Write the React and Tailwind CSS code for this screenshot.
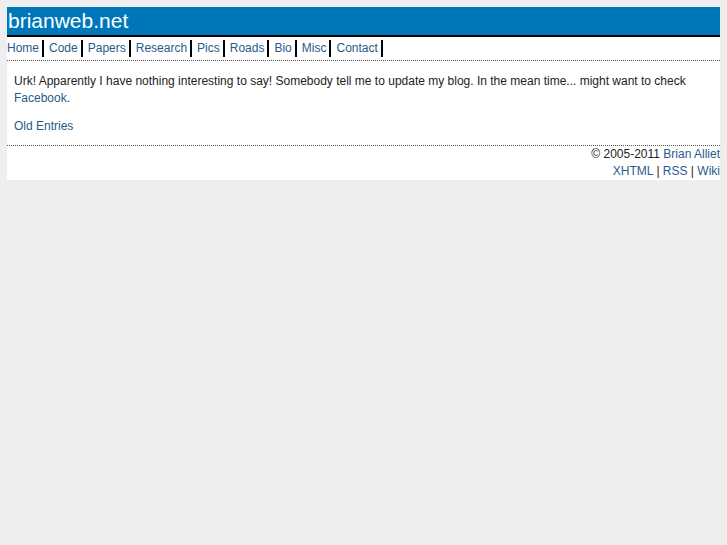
export default function App() {
  const links = ['Home', 'Code', 'Papers', 'Research', 'Pics', 'Roads', 'Bio', 'Misc', 'Contact']
  return (
    <div className="min-h-[545px] bg-[#eeeeee] pt-[7px] px-[7px] font-['Liberation_Sans',Arial,sans-serif]" >
      <div className="w-[713px] bg-white">
        {/* Header */}
        <div className="h-[30px] bg-[#0077bb] border-b-2 border-black text-white text-[21px] leading-[28px] pl-[1px]">
          brianweb.net
        </div>
        {/* Nav */}
        <div className="flex items-center h-[24px] border-b border-dotted border-[#555] text-[12px]">
          {links.map((l, i) => (
            <span key={l} className={`${i === 0 ? 'pl-0' : 'pl-[5px]'} pr-[3px] border-r-2 border-black leading-[17px] text-[#2a5a8c]`}>
              {l}
            </span>
          ))}
        </div>
        {/* Content */}
        <div className="px-[7px] pt-[12px] pb-[10px] text-[12px] leading-[17px] text-[#222]">
          <p>
            Urk! Apparently I have nothing interesting to say! Somebody tell me to update my blog. In the mean time... might want to check{' '}
            <a className="text-[#2a5a8c]">Facebook</a>.
          </p>
          <p className="mt-[11px]">
            <a className="text-[#2a5a8c]">Old Entries</a>
          </p>
        </div>
        {/* Footer */}
        <div className="border-t border-dotted border-[#555] text-right text-[12px] leading-[17px] text-[#222]">
          <div>
            © 2005-2011 <a className="text-[#2a5a8c]">Brian Alliet</a>
          </div>
          <div>
            <a className="text-[#2a5a8c]">XHTML</a> | <a className="text-[#2a5a8c]">RSS</a> | <a className="text-[#2a5a8c]">Wiki</a>
          </div>
        </div>
      </div>
    </div>
  )
}
